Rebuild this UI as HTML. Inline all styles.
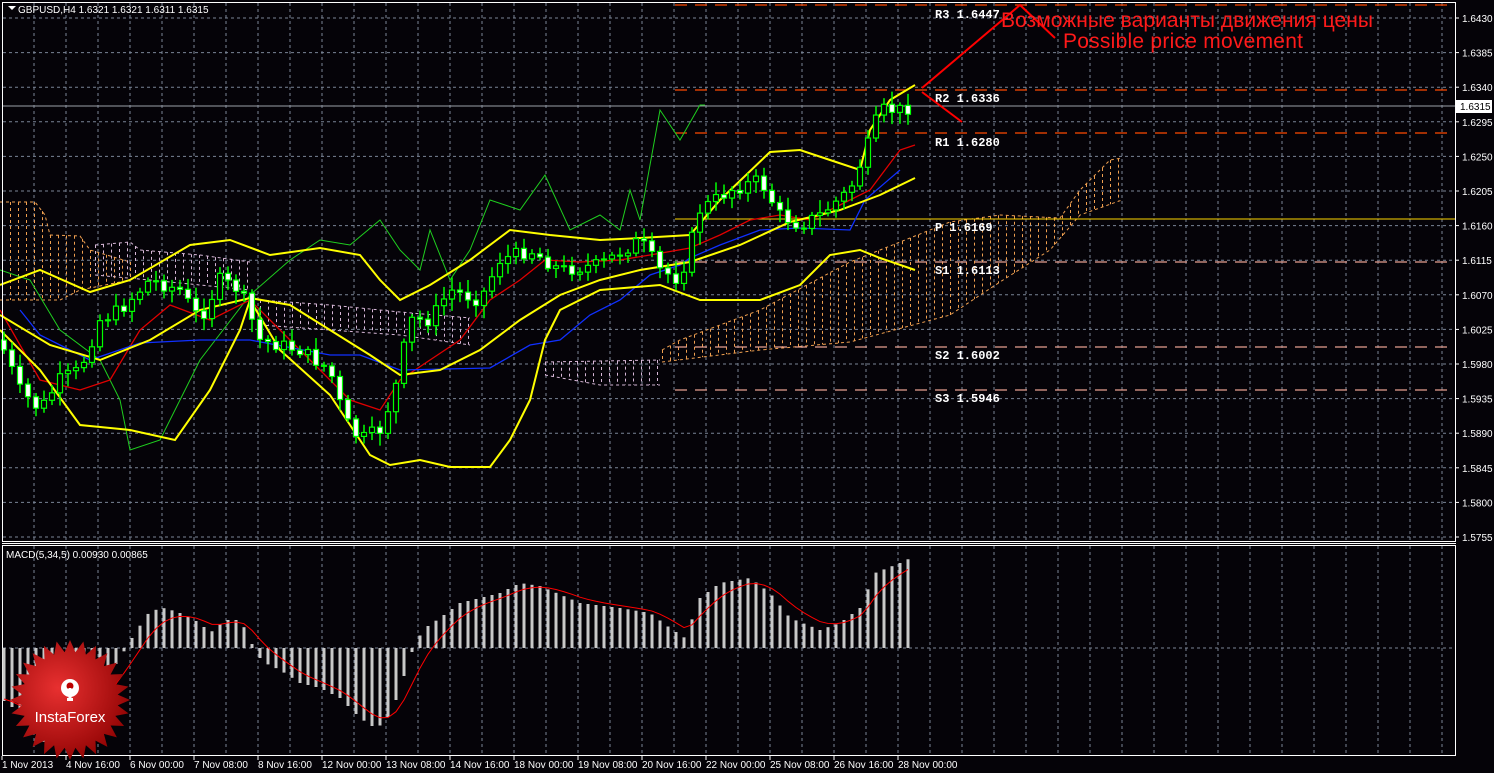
<!DOCTYPE html><html><head><meta charset="utf-8"><style>
body{margin:0;background:#000;width:1494px;height:773px;overflow:hidden;font-family:"Liberation Sans",sans-serif}
svg{display:block}
</style></head><body>
<svg id="s" width="1494" height="773" xmlns="http://www.w3.org/2000/svg" font-family="Liberation Sans, sans-serif">
<defs>
<radialGradient id="lg" cx="0.4" cy="0.4" r="0.7"><stop offset="0" stop-color="#e83030"/><stop offset="1" stop-color="#8a0000"/></radialGradient>
</defs>
<rect width="1494" height="773" fill="#050308"/>
<g id="grid" stroke="#7a8496" stroke-dasharray="3,3" stroke-width="1"></g>
<g id="clouds" stroke-width="1" stroke-dasharray="3,3"></g>
<!-- pivot lines -->
<g stroke="#ff4a00" stroke-width="1.3" stroke-dasharray="12,8">
<line x1="675" y1="5" x2="1455" y2="5"/><line x1="675" y1="90" x2="1455" y2="90"/><line x1="675" y1="133" x2="1455" y2="133"/></g>
<g stroke="#e8a090" stroke-width="1.3" stroke-dasharray="12,8">
<line x1="675" y1="262" x2="1455" y2="262"/><line x1="675" y1="347" x2="1455" y2="347"/><line x1="675" y1="390" x2="1455" y2="390"/></g>
<line x1="675" y1="219" x2="1455" y2="219" stroke="#ffd700" stroke-width="1"/>
<line x1="2" y1="106" x2="1455" y2="106" stroke="#9aa0a8" stroke-width="1"/>
<g fill="#fff" font-family="Liberation Mono, monospace" font-weight="bold" font-size="12">
<text x="935" y="18">R3 1.6447</text><text x="935" y="102">R2 1.6336</text><text x="935" y="146">R1 1.6280</text>
<text x="935" y="231">P 1.6169</text><text x="935" y="274">S1 1.6113</text><text x="935" y="359">S2 1.6002</text><text x="935" y="402">S3 1.5946</text></g>
<g fill="none" stroke-width="1.3">
<polyline stroke="#1fcf1f" stroke-width="1" points="0,270 30,280 60,330 100,360 120,400 130,450 160,440 200,360 250,295 290,260 320,240 350,245 380,220 400,250 420,270 430,230 450,280 470,250 490,200 520,210 545,175 570,230 600,215 620,230 630,190 640,220 660,110 680,140 700,105 705,105"/>
<polyline stroke="#e00000" points="0,310 40,380 80,390 110,380 140,330 170,305 210,320 250,300 280,330 320,370 350,400 380,410 400,380 430,360 460,340 490,300 520,280 545,260 580,262 620,260 650,255 690,248 720,235 750,220 780,215 810,220 840,205 870,190 900,150 915,145"/>
<polyline stroke="#1030ff" points="20,310 40,335 90,360 140,343 200,340 250,340 330,355 360,355 400,370 490,368 530,345 560,340 590,315 620,300 650,275 680,265 690,258 720,245 760,230 800,228 850,230 865,200 900,170"/>
<polyline stroke="#ffff00" stroke-width="2" points="0,285 40,270 90,292 130,280 190,245 230,240 270,255 320,248 360,255 380,280 400,300 430,285 470,260 510,230 550,235 600,240 640,238 690,235 720,200 770,152 800,150 830,160 860,170 870,130 890,100 915,85"/>
<polyline stroke="#ffff00" stroke-width="2" points="0,315 50,345 100,360 150,340 200,310 250,298 290,305 330,330 370,355 400,375 440,370 480,350 520,320 560,295 600,280 640,270 690,262 740,245 790,222 840,210 880,195 915,178"/>
<polyline stroke="#ffff00" stroke-width="2" points="0,330 40,370 80,425 130,430 175,440 210,390 240,330 250,300 280,350 330,395 370,455 390,465 420,460 450,467 490,467 510,440 530,400 545,340 560,310 600,290 660,285 700,300 760,300 800,285 830,255 860,250 880,258 915,270"/>
</g>
<g id="candles"></g>
<!-- annotation -->
<g stroke="#ff0000" stroke-width="2" fill="none"><polyline points="922,88 1020,5 1055,38"/><line x1="922" y1="92" x2="962" y2="122"/></g>
<text x="1001" y="27" fill="#ff1a1a" font-size="21" textLength="372">Возможные варианты движения цены</text>
<text x="1063" y="48" fill="#ff1a1a" font-size="21" textLength="240">Possible price movement</text>
<!-- frames -->
<rect x="2.5" y="2.5" width="1453" height="539" fill="none" stroke="#fff" stroke-width="1"/>
<rect x="2.5" y="545.5" width="1453" height="210" fill="none" stroke="#fff" stroke-width="1"/>
<line x1="2" y1="543.5" x2="1456" y2="543.5" stroke="#fff"/>
<polygon points="8,6 16,6 12,10" fill="#fff"/>
<text x="18" y="13" fill="#fff" font-size="10">GBPUSD,H4  1.6321 1.6321 1.6311 1.6315</text>
<text x="6" y="558" fill="#fff" font-size="10">MACD(5,34,5) 0.00930 0.00865</text>
<g id="axis" fill="#fff" font-size="10"></g>
<rect x="1456" y="100" width="36" height="13" fill="#fff"/><text x="1460" y="110" fill="#000" font-size="10">1.6315</text>
<g id="macd"></g>
<!-- logo -->
<g id="logo" transform="translate(70,700)">
<polygon id="star" fill="url(#lg)" points=""/>
<g fill="#fff"><circle cx="0" cy="-12" r="9"/><circle cx="0" cy="-14" r="3.5" fill="#b00"/><rect x="-1.5" y="-12" width="3" height="12"/><rect x="-3" y="-2" width="6" height="3"/></g>
<text x="0" y="22" text-anchor="middle" fill="#fff" font-size="15">InstaForex</text>
</g>
</svg>
<script>
var NS="http://www.w3.org/2000/svg";
function el(p,t,a){var e=document.createElementNS(NS,t);for(var k in a)e.setAttribute(k,a[k]);p.appendChild(e);return e}
function interp(pts,x){for(var i=0;i<pts.length-1;i++){if(x<=pts[i+1][0]){var a=pts[i],b=pts[i+1];return a[1]+(b[1]-a[1])*(x-a[0])/(b[0]-a[0]);}}return pts[pts.length-1][1];}
var g=document.getElementById('grid');
for(var x=34;x<1455;x+=32){el(g,'line',{x1:x,y1:3,x2:x,y2:541});el(g,'line',{x1:x,y1:546,x2:x,y2:755});}
var ax=document.getElementById('axis');
for(var i=0;i<16;i++){var y=18+i*34.6;if(y>540)break;el(g,'line',{x1:3,y1:y,x2:1455,y2:y});
 el(ax,'line',{x1:1455,y1:y,x2:1459,y2:y,stroke:'#fff'});
 var t=el(ax,'text',{x:1462,y:y+4});t.textContent=(1.6430-0.0045*i).toFixed(4);}
el(g,'line',{x1:3,y1:648,x2:1455,y2:648});
/* clouds: [color, x0, x1, top pts, bottom pts] */
var cl=document.getElementById('clouds');
var clouds=[
 ['#f0a050',2,130,[[0,202],[35,202],[45,215],[50,235],[80,236],[90,250],[130,262]],[[0,300],[60,300],[80,290],[130,280]]],
 ['#d8b8d8',95,250,[[95,245],[130,242],[140,250],[200,255],[250,262]],[[95,275],[150,280],[200,285],[250,290]]],
 ['#d8b8d8',260,470,[[260,300],[330,305],[400,312],[470,318]],[[260,325],[330,330],[400,335],[470,345]]],
 ['#d8b8d8',545,660,[[545,362],[660,360]],[[545,375],[600,385],[660,385]]],
 ['#f0a050',662,1122,[[662,350],[680,340],[760,310],[850,262],[950,222],[1000,215],[1060,218],[1080,190],[1110,160],[1122,158]],[[662,362],[760,350],[850,342],[950,315],[1000,282],[1050,250],[1080,215],[1122,200]]]
];
clouds.forEach(function(c){for(var x=c[1];x<=c[2];x+=8){var a=interp(c[3],x),b=interp(c[4],x);if(b>a)el(cl,'line',{x1:x+0.5,y1:a,x2:x+0.5,y2:b,stroke:c[0]});}
 var tp=c[3].map(function(p){return p.join(',')}).join(' ');el(cl,'polyline',{points:tp,fill:'none',stroke:c[0]});
 var bp=c[4].map(function(p){return p.join(',')}).join(' ');el(cl,'polyline',{points:bp,fill:'none',stroke:c[0]});});
var labs=['1 Nov 2013','4 Nov 16:00','6 Nov 00:00','7 Nov 08:00','8 Nov 16:00','12 Nov 00:00','13 Nov 08:00','14 Nov 16:00','18 Nov 00:00','19 Nov 08:00','20 Nov 16:00','22 Nov 00:00','25 Nov 08:00','26 Nov 16:00','28 Nov 00:00'];
labs.forEach(function(l,i){var x=2+i*64;el(ax,'line',{x1:x,y1:756,x2:x,y2:760,stroke:'#fff'});var t=el(ax,'text',{x:x,y:768});t.textContent=l;});
var pp=[[0,340],[20,390],[40,410],[60,380],[80,370],[100,320],[120,310],[150,280],[180,290],[200,320],[220,280],[240,290],[260,340],[300,350],[330,370],[345,420],[360,440],[380,430],[395,390],[410,320],[430,320],[450,290],[480,300],[500,260],[530,250],[560,270],[600,265],[640,240],[660,270],[680,280],[700,210],[730,190],[760,180],[780,215],[800,225],[820,215],[850,190],[870,140],[880,110],[900,110],[915,105]];
var c=document.getElementById('candles');var seed=7;function r(){seed=(seed*9301+49297)%233280;return seed/233280;}
var prev=interp(pp,0);
for(var x=4;x<=915;x+=8){var clv=interp(pp,x)+(r()-0.5)*14;var o=prev;var hi=Math.min(o,clv)-3-r()*10,lo=Math.max(o,clv)+3+r()*10;
 var up=clv<o;el(c,'line',{x1:x,y1:hi,x2:x,y2:lo,stroke:'#00ff00','stroke-width':1.5});
 el(c,'rect',{x:x-2.5,y:Math.min(o,clv),width:5,height:Math.max(1,Math.abs(o-clv)),fill:up?'#000':'#fff',stroke:'#00ff00','stroke-width':1.2});prev=clv;}
var mp=[[0,-50],[20,-65],[45,-95],[70,-70],[100,-40],[120,-10],[135,15],[150,37],[165,40],[180,35],[200,25],[210,15],[225,28],[240,28],[250,10],[255,-5],[265,-15],[280,-22],[300,-35],[320,-40],[340,-50],[360,-70],[375,-80],[385,-75],[395,-55],[405,-25],[415,5],[425,20],[440,30],[460,45],[500,55],[520,65],[540,62],[580,45],[620,40],[650,35],[670,20],[685,10],[700,50],[720,65],[750,70],[770,55],[790,30],[820,18],[840,25],[860,40],[875,75],[900,85],[915,92]];
var m=document.getElementById('macd');var sig=-50,sp=[];
for(var x=4;x<=915;x+=8){var v=interp(mp,x);el(m,'rect',{x:x-1.5,y:v>0?648-v:648,width:3,height:Math.max(1,Math.abs(v)),fill:'#c8c8c8'});sig=sig+(v-sig)*0.33;sp.push(x+','+(648-sig));}
el(m,'polyline',{points:sp.join(' '),fill:'none',stroke:'#f00','stroke-width':1});
var pts=[];for(var i=0;i<56;i++){var a=i*Math.PI/28,R=i%2?48:60;pts.push((R*Math.cos(a)).toFixed(1)+','+(R*Math.sin(a)).toFixed(1));}
document.getElementById('star').setAttribute('points',pts.join(' '));
document.getElementById('s').appendChild(document.getElementById('logo'));
</script>
</body></html>
